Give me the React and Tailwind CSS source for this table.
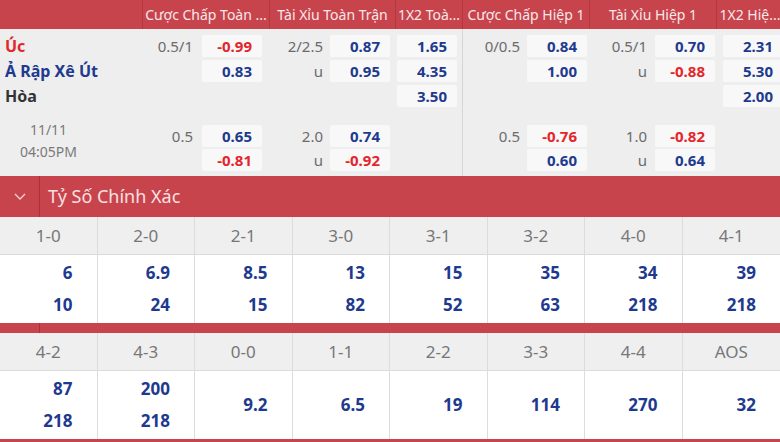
import React from "react";

const FONT = { fontFamily: '"Noto Sans", "Open Sans", Arial, sans-serif' };

const HEADERS = [
  { w: "w-[142px]", t: "" },
  { w: "w-[127px]", t: "Cược Chấp Toàn ..." },
  { w: "w-[126px]", t: "Tài Xỉu Toàn Trận" },
  { w: "w-[67px]", t: "1X2 Toà..." },
  { w: "w-[127px]", t: "Cược Chấp Hiệp 1" },
  { w: "w-[127px]", t: "Tài Xỉu Hiệp 1" },
  { w: "w-[67px]", t: "1X2 Hiệ..." },
];

/* each market column: width, label width, box offset, 5 slots */
const MARKETS = [
  {
    cell: "w-[127px]",
    label: "w-[51px]",
    box: "ml-[9px]",
    slots: [
      { l: "0.5/1", v: "-0.99", red: true },
      { l: "", v: "0.83" },
      null,
      { l: "0.5", v: "0.65" },
      { l: "", v: "-0.81", red: true },
    ],
  },
  {
    cell: "w-[126px]",
    label: "w-[54px]",
    box: "ml-[7px]",
    slots: [
      { l: "2/2.5", v: "0.87" },
      { l: "u", v: "0.95" },
      null,
      { l: "2.0", v: "0.74" },
      { l: "u", v: "-0.92", red: true },
    ],
  },
  {
    cell: "w-[67px]",
    label: null,
    box: "ml-[2px]",
    slots: [{ v: "1.65" }, { v: "4.35" }, { v: "3.50" }, null, null],
  },
  {
    cell: "w-[127px] border-l border-[#d6d6d6]",
    label: "w-[57px]",
    box: "ml-[7px]",
    slots: [
      { l: "0/0.5", v: "0.84" },
      { l: "", v: "1.00" },
      null,
      { l: "0.5", v: "-0.76", red: true },
      { l: "", v: "0.60" },
    ],
  },
  {
    cell: "w-[127px]",
    label: "w-[58px]",
    box: "ml-[8px]",
    slots: [
      { l: "0.5/1", v: "0.70" },
      { l: "u", v: "-0.88", red: true },
      null,
      { l: "1.0", v: "-0.82", red: true },
      { l: "u", v: "0.64" },
    ],
  },
  {
    cell: "w-[67px]",
    label: null,
    box: "ml-[7px]",
    slots: [{ v: "2.31" }, { v: "5.30" }, { v: "2.00" }, null, null],
  },
];

const SLOT_POS = [
  "h-[22px] mb-[3px]",
  "h-[22px] mb-[3px]",
  "h-[22px] mb-[3px]",
  "h-[22px] mt-[18px] mb-[2px]",
  "h-[22px]",
];

const SCORES_1 = [
  { s: "1-0", v: ["6", "10"] },
  { s: "2-0", v: ["6.9", "24"] },
  { s: "2-1", v: ["8.5", "15"] },
  { s: "3-0", v: ["13", "82"] },
  { s: "3-1", v: ["15", "52"] },
  { s: "3-2", v: ["35", "63"] },
  { s: "4-0", v: ["34", "218"] },
  { s: "4-1", v: ["39", "218"] },
];

const SCORES_2 = [
  { s: "4-2", v: ["87", "218"] },
  { s: "4-3", v: ["200", "218"] },
  { s: "0-0", v: ["9.2"] },
  { s: "1-1", v: ["6.5"] },
  { s: "2-2", v: ["19"] },
  { s: "3-3", v: ["114"] },
  { s: "4-4", v: ["270"] },
  { s: "AOS", v: ["32"] },
];

const MarketColumn = ({ m }) => (
  <div className={`${m.cell} shrink-0 pt-[6px]`}>
    {m.slots.map((s, i) => (
      <div key={i} className={`${SLOT_POS[i]} flex items-center`}>
        {s && (
          <>
            {m.label && (
              <span className={`${m.label} text-right text-[15px] text-[#6b6b6b]`}>
                {s.l}
              </span>
            )}
            <span
              className={`${m.box} w-[60px] h-[22px] bg-[#f8f8f8] rounded-[2px] pr-[10px] text-right text-[15px] leading-[22px] font-bold ${
                s.red ? "text-[#e4252b]" : "text-[#1e3a8e]"
              }`}
            >
              {s.v}
            </span>
          </>
        )}
      </div>
    ))}
  </div>
);

const ScoreTable = ({ rows }) => (
  <div className="grid grid-cols-8">
    {rows.map((r, i) => (
      <div key={r.s} className={`flex flex-col ${i < 7 ? "border-r border-[#dcdcdc]" : ""}`}>
        <div className="h-[38px] bg-[#efefef] border-b border-[#dadada] flex items-center justify-center text-[17px] text-[#777]">
          {r.s}
        </div>
        <div className="h-[68px] bg-white flex flex-col justify-center items-end pr-[24px]">
          {r.v.map((v, j) => (
            <span key={j} className="leading-[32px] text-[17px] font-bold text-[#1e3a8e]">
              {v}
            </span>
          ))}
        </div>
      </div>
    ))}
  </div>
);

export default function App() {
  return (
    <div className="w-[780px] h-[442px] overflow-hidden bg-white" style={FONT}>
      {/* ================= ODDS HEADER ================= */}
      <div className="flex h-[29px] bg-[#c8444d]">
        {HEADERS.map((h, i) => (
          <div
            key={i}
            className={`${h.w} shrink-0 flex items-center justify-center whitespace-nowrap overflow-hidden text-[14px] text-[#f7e8e9] ${
              i > 0 ? "border-l border-[#b5363f]" : ""
            }`}
          >
            {h.t}
          </div>
        ))}
      </div>

      {/* ================= ODDS BODY ================= */}
      <div className="flex h-[147px] bg-[#eeeeee]">
        <div className="w-[142px] shrink-0 pt-[6px] pl-[5px] text-[16px] font-bold">
          <div className="h-[22px] mb-[3px] flex items-center text-[#e02828]">Úc</div>
          <div className="h-[22px] mb-[3px] flex items-center text-[#1f3a8f]">Ả Rập Xê Út</div>
          <div className="h-[22px] mb-[3px] flex items-center text-[#333]">Hòa</div>
          <div className="mt-[12px] -ml-[5px] w-[97px] text-center font-normal text-[14px] leading-[22px] text-[#7a7a7a]">
            <div>11/11</div>
            <div>04:05PM</div>
          </div>
        </div>
        {MARKETS.map((m, i) => (
          <MarketColumn key={i} m={m} />
        ))}
      </div>

      {/* ================= EXACT SCORE BAND ================= */}
      <div className="flex h-[41px] bg-[#c8444d]">
        <div className="w-[40px] flex items-center justify-center border-r border-[#a8323b]">
          <svg width="12" height="7" viewBox="0 0 12 7" fill="none">
            <polyline points="1,1 6,6 11,1" stroke="#f3d3d5" strokeWidth="1.3" />
          </svg>
        </div>
        <div className="flex items-center pl-[8px] text-[18px] text-[#f8e0e1]">Tỷ Số Chính Xác</div>
      </div>

      <ScoreTable rows={SCORES_1} />

      <div className="h-[10px] bg-[#c8444d] flex">
        <div className="w-[40px] border-r border-[#a8323b]" />
      </div>

      <ScoreTable rows={SCORES_2} />
      <div className="h-[4px] bg-[#c8444d]" />
    </div>
  );
}
